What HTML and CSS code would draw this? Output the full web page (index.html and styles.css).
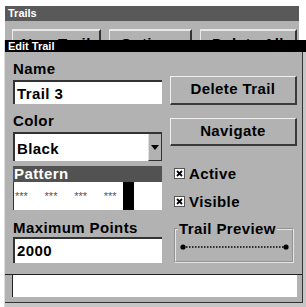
FILE: index.html
```html
<!DOCTYPE html>
<html lang="en">
<head>
    <meta charset="UTF-8">
    <meta name="viewport" content="width=device-width, initial-scale=1.0">
    <title>Edit Trail</title>
    <link rel="stylesheet" href="styles.css">
</head>
<body>
    <div class="window">
        <div class="title">Trails</div>
        <div class="win-body">
            <div class="toolbar">
                <div class="tbtn tbtn-new">New Trail</div>
                <div class="tbtn tbtn-opt">Options</div>
                <div class="tbtn tbtn-del">Delete All</div>
            </div>
        </div>
    </div>

    <div class="dialog">
        <div class="dlg-title">Edit Trail</div>
        <div class="dlg-body">
            <div class="form">
                <div class="col">
                    <div class="label">Name</div>
                    <div class="field field-name">Trail 3</div>

                    <div class="label label-gap">Color</div>
                    <div class="select">
                        <div class="select-text">Black</div>
                        <div class="select-arrow">
                            <svg width="8" height="5" viewBox="0 0 8 5"><path d="M0 0 H8 L4 5 Z" fill="#000"/></svg>
                        </div>
                    </div>

                    <div class="pattern">
                        <div class="pattern-bar">Pattern</div>
                        <div class="pattern-box">
                            <div class="stars">
                                <span>***</span><span>***</span><span>***</span><span>***</span>
                            </div>
                            <div class="block"></div>
                            <div class="rest"></div>
                        </div>
                    </div>

                    <div class="label label-max">Maximum Points</div>
                    <div class="field field-max">2000</div>
                </div>

                <div class="col">
                    <div class="btn btn-delete">Delete Trail</div>
                    <div class="btn btn-nav">Navigate</div>

                    <div class="check check-active">
                        <span class="box">
                            <svg width="9" height="9" viewBox="0 0 9 9"><path d="M2 2 L7 7 M7 2 L2 7" stroke="#000" stroke-width="1.8"/></svg>
                        </span>
                        Active
                    </div>
                    <div class="check check-visible">
                        <span class="box">
                            <svg width="9" height="9" viewBox="0 0 9 9"><path d="M2 2 L7 7 M7 2 L2 7" stroke="#000" stroke-width="1.8"/></svg>
                        </span>
                        Visible
                    </div>

                    <fieldset class="preview">
                        <legend>Trail Preview</legend>
                        <svg width="116" height="24" viewBox="0 0 116 24">
                            <line x1="7" y1="10" x2="110" y2="10" stroke="#000" stroke-width="1.5" stroke-dasharray="1.5 1.5"/>
                            <circle cx="7" cy="10" r="2.6" fill="#000"/>
                            <circle cx="110" cy="10" r="2.6" fill="#000"/>
                        </svg>
                    </fieldset>
                </div>
            </div>

            <div class="status">
                <div class="status-box"></div>
            </div>
        </div>
    </div>
</body>
</html>
```

FILE: styles.css
```css
body {
    margin: 0;
    width: 306px;
    height: 307px;
    overflow: hidden;
    position: relative;
    background-color: #fff;
    font-family: 'Liberation Sans', Arial, sans-serif;
    font-weight: bold;
    color: #000;
}

/* Trails window behind the dialog */
.window {
    margin: 6px 0 0 5px;
    width: 294px;
    height: 301px;
    background-color: #b2b2b2;
}

.title {
    height: 15px;
    line-height: 15px;
    padding-left: 3px;
    background-color: #595959;
    color: #fff;
    font-size: 11px;
}

.toolbar {
    display: flex;
    gap: 8px;
    padding: 8px 0 0 7px;
}

.tbtn {
    box-sizing: border-box;
    height: 26px;
    padding-top: 5px;
    border-top: 2px solid #e8e8e8;
    border-left: 1px solid #e8e8e8;
    border-right: 2px solid #333;
    font-size: 15px;
    line-height: 16px;
    letter-spacing: 0.4px;
    text-align: center;
}

.tbtn-new { width: 89px; }
.tbtn-opt { width: 83px; }
.tbtn-del { width: 97px; }

/* Edit Trail dialog */
.dialog {
    position: absolute;
    left: 4px;
    top: 40px;
    right: 0;
    bottom: 0;
    border-left: 1px solid #dcdcdc;
    background-color: #c6c6c6;
}

.dlg-title {
    height: 12px;
    line-height: 12px;
    padding-left: 3px;
    background-color: #000;
    color: #fff;
    font-size: 11px;
}

.dlg-body {
    margin-right: 3px;
    background-color: #b2b2b2;
    border-right: 1px solid #333;
    border-bottom: 1px solid #333;
}

.form {
    box-sizing: border-box;
    height: 222px;
    padding: 9px 5px 0 8px;
    display: grid;
    grid-template-columns: 149px 127px;
    column-gap: 8px;
}

.col {
    display: flex;
    flex-direction: column;
}

.label,
.field,
.select-text,
.pattern-bar,
.btn,
.check,
.preview legend {
    font-size: 15px;
    line-height: 16px;
    letter-spacing: 0.4px;
}

.label {
    height: 16px;
}

.label-gap {
    margin-top: 9px;
}

.label-max {
    margin-top: 10px;
}

.field {
    box-sizing: border-box;
    margin-top: 3px;
    height: 24px;
    padding: 4px 0 0 2px;
    background-color: #fff;
    border-top: 2px solid #333;
    border-left: 2px solid #333;
}

.field-max {
    margin-top: 1px;
    height: 26px;
    padding-top: 4px;
}

.select {
    box-sizing: border-box;
    margin-top: 3px;
    height: 29px;
    display: flex;
    background-color: #fff;
    border-top: 2px solid #333;
    border-left: 2px solid #333;
}

.select-text {
    flex: 1;
    padding: 7px 0 0 2px;
}

.select-arrow {
    box-sizing: border-box;
    width: 14px;
    display: flex;
    align-items: center;
    justify-content: center;
    background-color: #b2b2b2;
    border-left: 1px solid #e0e0e0;
    border-right: 1px solid #333;
    border-bottom: 1px solid #333;
}

.pattern {
    margin-top: 5px;
}

.pattern-bar {
    height: 16px;
    padding-left: 1px;
    background-color: #525252;
    color: #fff;
}

.pattern-box {
    height: 28px;
    display: flex;
    background-color: #fff;
    border-left: 1px solid #333;
}

.stars {
    width: 108px;
    padding-left: 1px;
    font-size: 11px;
    font-weight: normal;
    line-height: 28px;
    color: #555;
    white-space: nowrap;
}

.stars span {
    display: inline-block;
    width: 29.6px;
}

.block {
    width: 11px;
    background-color: #000;
}

.rest {
    flex: 1;
}

.btn {
    box-sizing: border-box;
    height: 29px;
    padding-top: 4px;
    text-align: center;
    border-top: 1px solid #f0f0f0;
    border-left: 1px solid #f0f0f0;
    border-right: 2px solid #3a3a3a;
    border-bottom: 2px solid #3a3a3a;
}

.btn-delete {
    margin-top: 15px;
}

.btn-nav {
    margin-top: 13px;
    height: 28px;
}

.check {
    display: flex;
    align-items: flex-start;
    height: 16px;
    padding-left: 4px;
}

.check-active {
    margin-top: 20px;
}

.check-visible {
    margin-top: 12px;
}

.box {
    box-sizing: border-box;
    width: 11px;
    height: 11px;
    margin: 2px 4px 0 0;
    display: flex;
    align-items: center;
    justify-content: center;
    background-color: #fff;
    border: 1px solid #555;
}

.preview {
    margin: 11px 0 0 4px;
    padding: 0;
    width: 120px;
    box-sizing: border-box;
    border: 2px groove #e6e6e6;
}

.preview legend {
    margin-left: 2px;
    padding: 0 1px;
}

.preview svg {
    display: block;
}

.status {
    height: 22px;
    padding: 0 5px 5px 7px;
    border-top: 1px solid #222;
}

.status-box {
    height: 22px;
    background-color: #fff;
    border-left: 1px solid #222;
}
```
